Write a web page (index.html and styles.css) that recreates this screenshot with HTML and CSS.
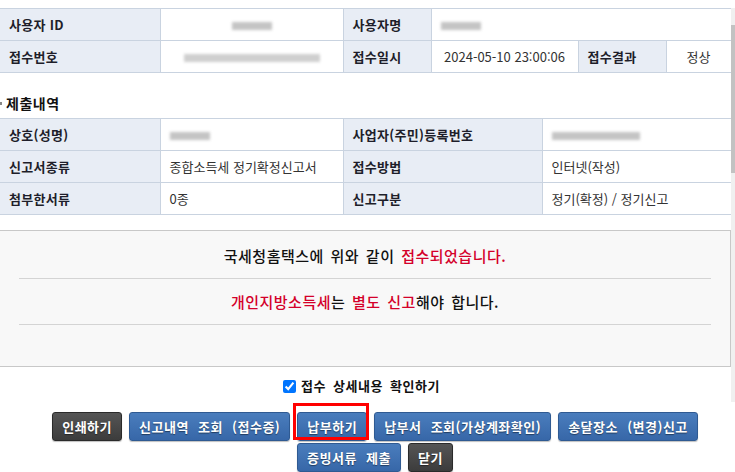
FILE: index.html
```html
<!DOCTYPE html>
<html lang="ko">
<head>
<meta charset="utf-8">
<title>신고서 접수증</title>
<link rel="stylesheet" href="styles.css">
</head>
<body>
<div class="page">
  <table class="info">
    <colgroup>
      <col class="c-h1"><col class="c-v1"><col class="c-h2"><col class="c-v2"><col class="c-h3"><col class="c-v3">
    </colgroup>
    <tr>
      <th>사용자 ID</th>
      <td class="center"><span class="blur b-id"></span></td>
      <th>사용자명</th>
      <td colspan="3"><span class="blur b-name"></span></td>
    </tr>
    <tr>
      <th>접수번호</th>
      <td class="center"><span class="blur b-no"></span></td>
      <th>접수일시</th>
      <td class="center">2024-05-10 23:00:06</td>
      <th>접수결과</th>
      <td class="center">정상</td>
    </tr>
  </table>

  <h3 class="section-title"><span class="bullet"></span>제출내역</h3>

  <table class="info">
    <colgroup>
      <col class="c-h1"><col class="c-v1"><col class="c-h4"><col class="c-v4">
    </colgroup>
    <tr>
      <th>상호(성명)</th>
      <td><span class="blur b-name"></span></td>
      <th>사업자(주민)등록번호</th>
      <td><span class="blur b-biz"></span></td>
    </tr>
    <tr>
      <th>신고서종류</th>
      <td>종합소득세 정기확정신고서</td>
      <th>접수방법</th>
      <td>인터넷(작성)</td>
    </tr>
    <tr>
      <th>첨부한서류</th>
      <td>0종</td>
      <th>신고구분</th>
      <td>정기(확정) / 정기신고</td>
    </tr>
  </table>

  <div class="notice">
    <p>국세청홈택스에 위와 같이 <em>접수되었습니다.</em></p>
    <hr>
    <p><em>개인지방소득세</em>는 <em>별도 신고</em>해야 합니다.</p>
    <hr>
  </div>

  <div class="confirm">
    <label><input type="checkbox" checked> 접수 상세내용 확인하기</label>
  </div>

  <div class="buttons">
    <button class="btn dark">인쇄하기</button>
    <button class="btn">신고내역 조회 (접수증)</button>
    <span class="highlight"><button class="btn">납부하기</button></span>
    <button class="btn">납부서 조회(가상계좌확인)</button>
    <button class="btn">송달장소 (변경)신고</button>
    <button class="btn">증빙서류 제출</button>
    <button class="btn dark">닫기</button>
  </div>
</div>
<div class="scrollbar"><div class="thumb"></div></div>
</body>
</html>
```
FILE: styles.css
```css
html, body {
  margin: 0;
  padding: 0;
  background: #fff;
  overflow: hidden;
}
body {
  font-family: "Noto Sans CJK KR", "Noto Sans", sans-serif;
  font-size: 13px;
  color: #333;
  width: 735px;
  height: 472px;
  position: relative;
}
.page {
  padding-top: 8px;
  width: 731px;
}
.info {
  width: 731px;
  border-collapse: collapse;
  table-layout: fixed;
  border-top: 1px solid #111;
}
.c-h1 { width: 160px; }
.c-v1 { width: 183px; }
.c-h2 { width: 88px; }
.c-v2 { width: 147px; }
.c-h3 { width: 88px; }
.c-v3 { width: 65px; }
.c-h4 { width: 199px; }
.c-v4 { width: 189px; }
.info th, .info td {
  height: 31px;
  padding: 0 0 0 9px;
  border: 1px solid #c9d3e0;
  line-height: 20px;
  white-space: nowrap;
}
.info tr > :first-child { border-left: none; }
.info th {
  background: #e8edf5;
  color: #1e1e2a;
  font-weight: bold;
  text-align: left;
  letter-spacing: 0.3px;
}
.info td {
  background: #fff;
  color: #333;
  text-align: left;
}
.info td.center {
  text-align: center;
  padding-left: 0;
}
.blur {
  display: inline-block;
  vertical-align: middle;
  height: 8px;
  background: #c4c4c4;
  filter: blur(1.5px);
}
.b-id { width: 40px; }
.b-name { width: 40px; }
.b-no { width: 136px; background: #cfcfcf; }
.b-biz { width: 88px; }

.section-title {
  margin: 0;
  padding: 20px 0 5px 0;
  font-size: 14px;
  line-height: 20px;
  font-weight: bold;
  color: #111;
  display: flex;
  align-items: center;
  gap: 4px;
  letter-spacing: 0.5px;
}
.bullet {
  display: inline-block;
  width: 2px;
  height: 3px;
  background: #888;
}

.notice {
  margin-top: 15px;
  background: #f8f8f8;
  border: 1px solid #c8c8c8;
  border-left: none;
  padding: 15px 19px 28px 19px;
  text-align: center;
}
.notice p {
  margin: 0;
  font-size: 15px;
  font-weight: 500;
  line-height: 20px;
  color: #111;
  word-spacing: 2px;
  letter-spacing: 0.5px;
}
.notice em {
  font-style: normal;
  color: #d4002a;
}
.notice hr {
  border: none;
  border-top: 1px solid #d4d4d4;
  margin: 12px 0 13px 0;
}

.confirm {
  margin-top: 9px;
  height: 20px;
  text-align: center;
  font-weight: bold;
  color: #111;
  line-height: 20px;
  letter-spacing: 0.5px;
  word-spacing: 3px;
}
.confirm label {
  display: inline-flex;
  align-items: center;
  gap: 5px;
  margin-right: 8px;
}
.confirm input {
  margin: 0;
  width: 13px;
  height: 13px;
}

.buttons {
  margin-top: 16px;
  margin-left: 10px;
  width: 730px;
  display: flex;
  flex-wrap: wrap;
  justify-content: center;
  column-gap: 7px;
  row-gap: 2px;
}
.btn {
  height: 29px;
  padding: 0 9px;
  border: 1px solid #2f5a92;
  border-radius: 3px;
  background: linear-gradient(#4a7dbd, #3767a8);
  color: #fff;
  font-family: inherit;
  font-size: 13px;
  font-weight: bold;
  letter-spacing: 0.5px;
  word-spacing: 5px;
  text-shadow: 0 1px 1px rgba(0,0,0,0.45);
  box-shadow: 0 1px 1px rgba(0,0,0,0.25);
  cursor: pointer;
}
.btn.dark {
  background: linear-gradient(#555, #3c3c3c);
  border-color: #2a2a2a;
}
.highlight {
  position: relative;
  display: inline-flex;
}
.highlight::after {
  content: "";
  position: absolute;
  left: -4px;
  right: -2px;
  top: -9px;
  bottom: 1px;
  border: 3px solid #f00;
  pointer-events: none;
}

.scrollbar {
  position: absolute;
  right: 0;
  top: 8px;
  width: 4px;
  height: 394px;
  background: #f0f0f0;
}
.thumb {
  margin-top: 17px;
  height: 148px;
  background: #c2c2c2;
}
```
